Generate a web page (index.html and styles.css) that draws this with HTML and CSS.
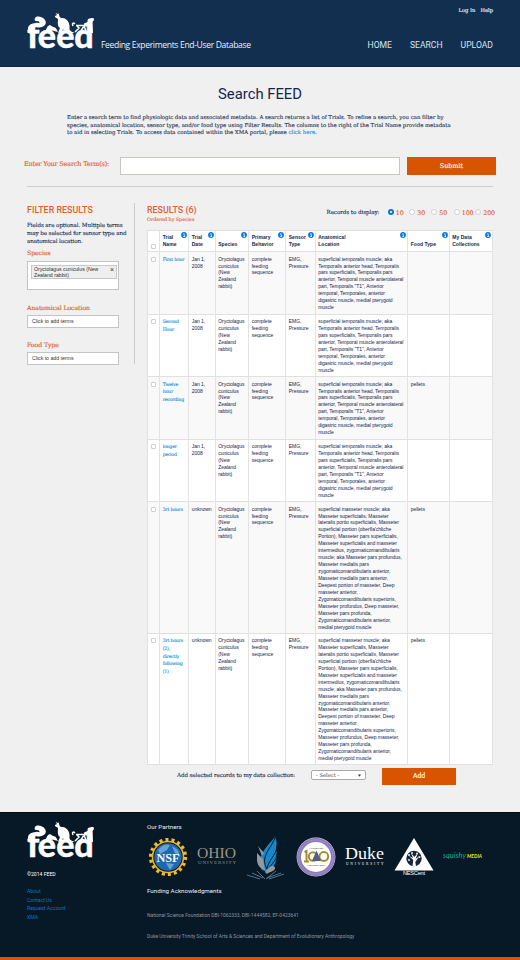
FILE: index.html
```html
<!DOCTYPE html>
<html lang="en">
<head>
<meta charset="utf-8">
<title>Search FEED</title>
<link rel="stylesheet" href="styles.css">
</head>
<body>
<svg class="defs" aria-hidden="true">
  <symbol id="animals" viewBox="0 0 68 38">
    <path d="M2 20 C-1 14 3 10 8 11 C13 13 14 8 10 8 C8 8 7 7 8 5 C10 2 16 4 18 7 C21 12 15 16 9 14 C6 14 7 17 9 18 L5 20Z" fill="#fff"/>
    <path d="M18 19 C20 15 20 13 23 12 L26 14 C29 14 30 17 31 19 L27 18 C24 17 21 19 18 19Z" fill="#fff"/>
    <path d="M28 3 L30 2 L28.5 0 L31 1 L31.5 0 L32.5 3.5 C33 5 34 5 36 5 C41 6 43 11 42.5 15 C42 19 46 19 48 20 L40 20 C39 17 37 16 35 17 L35 19 L31 20 L33 15 C30 13 31 9 31 6 L28 4Z" fill="#fff"/>
    <path d="M46 13 C44.5 9 47 10 48 11 M49 12.5 H58 M50 13 L52 15 L48 19 M57 13 L59 18 M56.5 14 L54 17.5" stroke="#fff" stroke-width="1.5" fill="none"/><path d="M57 10.5 L59.5 9.5 L61.5 11 L60 13.5 L57 13.5Z" fill="#fff"/>
    <path d="M60.5 20 L61.5 10 L60.5 8 C60.5 5 64 5 66.5 5 L67 7 L65.5 9 L66 20Z" fill="#fff"/>
  </symbol>
  <symbol id="info" viewBox="0 0 6 6"><circle cx="3" cy="3" r="2.9" fill="#0877d9"/><path d="M2.4 2.6H3.4V4.5M2.3 4.5H4M2.9 1.2V2" stroke="#fff" stroke-width=".8" fill="none"/></symbol>
</svg>

<header class="top">
  <svg class="logo" viewBox="0 0 68 38"><use href="#animals" width="68" height="38"/><text class="feed" y="34.8" x="0 10.8 29.2 47.3">feed</text></svg>
  <p class="tagline">Feeding Experiments End-User Database</p>
  <div class="menus">
    <div class="account"><a>Log In</a><a>Help</a></div>
    <nav><a>HOME</a><a>SEARCH</a><a>UPLOAD</a></nav>
  </div>
</header>

<main>
  <h1>Search FEED</h1>
  <p class="intro">Enter a search term to find physiologic data and associated metadata. A search returns a list of Trials. To refine a search, you can filter by<br>species, anatomical location, sensor type, and/or food type using Filter Results. The columns to the right of the Trial Name provide metadata<br>to aid in selecting Trials. To access data contained within the XMA portal, please <a>click here</a>.</p>
  <form class="search"><label>Enter Your Search Term(s):</label><div class="query"></div><div class="btn submit">Submit</div></form>

  <div class="columns">
    <aside>
      <h2>FILTER RESULTS</h2>
      <p>Fields are optional. Multiple terms<br>may be selected for sensor type and<br>anatomical location.</p>
      <h3>Species</h3>
      <div class="box tall"><div class="token"><span>Oryctolagus cuniculus (New<br>Zealand rabbit)</span><b>×</b></div></div>
      <h3>Anatomical Location</h3>
      <div class="box">Click to add terms</div>
      <h3>Food Type</h3>
      <div class="box">Click to add terms</div>
    </aside>

    <section class="results">
      <div class="bar">
        <div><h2>RESULTS (6)</h2><p class="order">Ordered by Species</p></div>
        <div class="display"><span class="lbl">Records to display:</span><span class="opts"><label><i class="on"></i>10</label><label><i></i>30</label><label><i></i>50</label><label><i></i>100</label><label><i></i>200</label></span></div>
      </div>
      <div class="table">
        <div class="row head"><div><i class="chk"></i></div><div>Trial<br>Name<svg><use href="#info"/></svg></div><div>Trial<br>Date<svg><use href="#info"/></svg></div><div>Species<svg><use href="#info"/></svg></div><div>Primary<br>Behavior<svg><use href="#info"/></svg></div><div>Sensor<br>Type<svg><use href="#info"/></svg></div><div>Anatomical<br>Location<svg><use href="#info"/></svg></div><div>Food Type<svg><use href="#info"/></svg></div><div>My Data<br>Collections<svg><use href="#info"/></svg></div></div>
        <div class="row"><div><i class="chk"></i></div><div class="name">First hour</div><div>Jan 1,<br>2008</div><div>Oryctolagus<br>cuniculus<br>(New<br>Zealand<br>rabbit)</div><div>complete<br>feeding<br>sequence</div><div>EMG,<br>Pressure</div><div>superficial temporalis muscle; aka<br>Temporalis anterior head, Temporalis<br>pars superficialis, Temporalis pars<br>anterior, Temporal muscle anterolateral<br>part, Temporalis "T1", Anterior<br>temporal, Temporales, anterior<br>digastric muscle, medial pterygoid<br>muscle</div><div></div><div></div></div>
        <div class="row"><div><i class="chk"></i></div><div class="name">Second<br>Hour</div><div>Jan 1,<br>2008</div><div>Oryctolagus<br>cuniculus<br>(New<br>Zealand<br>rabbit)</div><div>complete<br>feeding<br>sequence</div><div>EMG,<br>Pressure</div><div>superficial temporalis muscle; aka<br>Temporalis anterior head, Temporalis<br>pars superficialis, Temporalis pars<br>anterior, Temporal muscle anterolateral<br>part, Temporalis "T1", Anterior<br>temporal, Temporales, anterior<br>digastric muscle, medial pterygoid<br>muscle</div><div></div><div></div></div>
        <div class="row"><div><i class="chk"></i></div><div class="name">Twelve<br>hour<br>recording</div><div>Jan 1,<br>2008</div><div>Oryctolagus<br>cuniculus<br>(New<br>Zealand<br>rabbit)</div><div>complete<br>feeding<br>sequence</div><div>EMG,<br>Pressure</div><div>superficial temporalis muscle; aka<br>Temporalis anterior head, Temporalis<br>pars superficialis, Temporalis pars<br>anterior, Temporal muscle anterolateral<br>part, Temporalis "T1", Anterior<br>temporal, Temporales, anterior<br>digastric muscle, medial pterygoid<br>muscle</div><div>pellets</div><div></div></div>
        <div class="row"><div><i class="chk"></i></div><div class="name">longer<br>period</div><div>Jan 1,<br>2008</div><div>Oryctolagus<br>cuniculus<br>(New<br>Zealand<br>rabbit)</div><div>complete<br>feeding<br>sequence</div><div>EMG,<br>Pressure</div><div>superficial temporalis muscle; aka<br>Temporalis anterior head, Temporalis<br>pars superficialis, Temporalis pars<br>anterior, Temporal muscle anterolateral<br>part, Temporalis "T1", Anterior<br>temporal, Temporales, anterior<br>digastric muscle, medial pterygoid<br>muscle</div><div></div><div></div></div>
        <div class="row long"><div><i class="chk"></i></div><div class="name">3rt hours</div><div>unknown</div><div>Oryctolagus<br>cuniculus<br>(New<br>Zealand<br>rabbit)</div><div>complete<br>feeding<br>sequence</div><div>EMG,<br>Pressure</div><div>superficial masseter muscle; aka<br>Masseter superficialis, Masseter<br>lateralis portio superficialis, Masseter<br>superficial portion (oberfla'chliche<br>Portion), Masseter pars superficialis,<br>Masseter superficialis and masseter<br>intermedius, zygomaticomandibularis<br>muscle; aka Masseter pars profundus,<br>Masseter medialis pars<br>zygomaticomandibularis anterior,<br>Masseter medialis pars anterior,<br>Deepest portion of masseter, Deep<br>masseter anterior,<br>Zygomaticomandibularis superioris,<br>Masseter profundus, Deep masseter,<br>Masseter pars profunda,<br>Zygomaticomandibularis anterior,<br>medial pterygoid muscle</div><div>pellets</div><div></div></div>
        <div class="row long"><div><i class="chk"></i></div><div class="name">3rt hours<br>(2),<br>directly<br>following<br>(1)</div><div>unknown</div><div>Oryctolagus<br>cuniculus<br>(New<br>Zealand<br>rabbit)</div><div>complete<br>feeding<br>sequence</div><div>EMG,<br>Pressure</div><div>superficial masseter muscle; aka<br>Masseter superficialis, Masseter<br>lateralis portio superficialis, Masseter<br>superficial portion (oberfla'chliche<br>Portion), Masseter pars superficialis,<br>Masseter superficialis and masseter<br>intermedius, zygomaticomandibularis<br>muscle; aka Masseter pars profundus,<br>Masseter medialis pars<br>zygomaticomandibularis anterior,<br>Masseter medialis pars anterior,<br>Deepest portion of masseter, Deep<br>masseter anterior,<br>Zygomaticomandibularis superioris,<br>Masseter profundus, Deep masseter,<br>Masseter pars profunda,<br>Zygomaticomandibularis anterior,<br>medial pterygoid muscle</div><div>pellets</div><div></div></div>
      </div>
      <div class="collect"><span>Add selected records to my data collection:</span><div class="select"><span>- Select -</span><svg viewBox="0 0 4 3"><path d="M0 0H4L2 3Z" fill="#333"/></svg></div><div class="btn add">Add</div></div>
    </section>
  </div>
</main>

<footer>
  <div class="left">
    <svg class="logo" viewBox="0 0 68 38"><use href="#animals" width="68" height="38"/><text class="feed" y="34.8" x="0 10.8 29.2 47.3">feed</text></svg>
    <p class="copy">©2014 FEED</p>
    <ul><li>About</li><li>Contact Us</li><li>Request Account</li><li>XMA</li></ul>
  </div>
  <div class="right">
    <h4>Our Partners</h4>
    <div class="partners">
      <svg width="40" height="42" viewBox="0 0 40 42"><circle cx="20" cy="21" r="15.5" fill="none" stroke="#e8b423" stroke-width="1.6"/><circle cx="20" cy="21" r="17.4" fill="none" stroke="#f0bd25" stroke-width="3.4" stroke-dasharray="3 3.07"/><circle cx="20" cy="21" r="13.8" fill="#1d68ae"/><path d="M10 14 Q16 7 22 9 L19 14 L12 18Z M24 10 L30 14 L32 21 L27 17Z M18 27 L26 28 L22 34Z" fill="#67a3d2"/><text x="8.5" y="25.5" textLength="23" lengthAdjust="spacingAndGlyphs" class="nsf">NSF</text></svg>
      <svg width="40" height="42" viewBox="0 0 40 42"><text x="0" y="22.3" textLength="39" lengthAdjust="spacingAndGlyphs" class="ohio">OHIO</text><text x="1" y="27.5" textLength="38" class="univ">UNIVERSITY</text></svg>
      <svg width="40" height="45" viewBox="-1 0 40 45"><path d="M15 34 C9 23 17 13 28 1 C32 10 27 12 30 17 C30 24 28 32 20 36Z" fill="#1687cb"/><path d="M20 33 C13 21 23 14 28 2 M20 35 C20 24 30 20 30 9 M20 36 C22 29 30 26 30 17" stroke="#071827" stroke-width="1" fill="none"/><path d="M10 17 L16 23 L18 34 C13 33 10 28 10 24Z M11 10 L17 17 L15 20Z M18 36 C23 28 29 29 28 33 C26 36 22 36 20 38Z" fill="#9299a1"/><path d="M0 39 L13 43 M5 37 L16 42 M10 35 L18 43 M37 38 L22 43 M34 37 L20 42 M29 35 L19 43" stroke="#678ca8" stroke-width=".8"/></svg>
      <svg width="40" height="42" viewBox="0 0 40 42"><circle cx="20" cy="21" r="19.4" fill="#d8d3e6"/><circle cx="20" cy="21" r="17" fill="#fff" stroke="#8d7bbd" stroke-width="4"/><circle cx="20" cy="21" r="17" fill="none" stroke="#b0a2d6" stroke-width="1" stroke-dasharray="1 1"/><text x="13" y="13" textLength="14" class="micro">A Proud Past</text><path d="M8.5 16 L10.5 15 V25 M8 25.5 H13" fill="none" stroke="#a78b2d" stroke-width="2"/><circle cx="17" cy="20.5" r="4.2" fill="none" stroke="#a78b2d" stroke-width="2"/><circle cx="27.8" cy="20.5" r="4.4" fill="none" stroke="#a78b2d" stroke-width="2"/><path d="M20.5 14.5 L25 25 H16Z" fill="#555f85"/><text x="11" y="30" textLength="18" class="micro">A Brilliant Future</text></svg>
      <svg width="40" height="42" viewBox="0 0 40 42"><text x="0" y="22.6" textLength="39" lengthAdjust="spacingAndGlyphs" class="duke">Duke</text><text x="1" y="28.6" textLength="37.5" class="dukeu">UNIVERSITY</text></svg>
      <svg width="40" height="42" viewBox="0 0 40 42"><path d="M20 2 L39.5 34.5 H.5Z" fill="#fff"/><circle cx="20" cy="22.5" r="7.7" fill="#17273a"/><path d="M18.5 30 L19.3 24 L15 20 L19 22 L17 17 L20.3 21 L24 17 L21.5 23 L25.5 20 L21.3 26 L22 30Z" fill="#fff"/><g fill="#dfe5ea"><circle cx="15" cy="19" r="1.1"/><circle cx="18" cy="17" r="1"/><circle cx="23" cy="17.5" r="1"/><circle cx="25.5" cy="21" r="1"/><circle cx="15" cy="24" r="1"/></g><text x="9" y="39.4" textLength="22" class="nes">NESCent</text></svg>
      <svg width="40" height="42" viewBox="0 0 40 42"><text x="0" y="22.3" textLength="23" lengthAdjust="spacingAndGlyphs" class="squ">squishy</text><text x="24" y="22" textLength="15" lengthAdjust="spacingAndGlyphs" class="med">MEDIA</text></svg>
    </div>
    <h4 class="fund">Funding Acknowledgments</h4>
    <p>National Science Foundation DBI-1062333, DBI-1444582, EF-0423641</p>
    <p>Duke University Trinity School of Arts &amp; Sciences and Department of Evolutionary Anthropology</p>
  </div>
</footer>
</body>
</html>
```
FILE: styles.css
```css
* { box-sizing: border-box; margin: 0; padding: 0; }
body { width: 520px; height: 960px; overflow: hidden; background: #f0f0f0; color: #1b3359; font-family: "DejaVu Serif", serif; font-size: 6px; white-space: nowrap; }
.defs { display: none; }
i { font-style: normal; }

.top { height: 67px; background: #122f50; border-bottom: 1px solid #0c2343; display: flex; padding: 0 27px; color: #e8f3fa; }
.logo { display: block; width: 68px; height: 38px; flex: none; overflow: visible; }
.top .logo { margin-top: 13px; }
.feed { font: 900 34px Lato, sans-serif; fill: #fff; stroke: #fff; stroke-width: .4px; }
.tagline { margin: 39px 0 0 6px; font: 500 8.6px/12px "Open Sans", sans-serif; letter-spacing: -.36px; }
.menus { margin-left: auto; }
.account { display: flex; justify-content: flex-end; gap: 5px; margin-top: 6px; font-size: 5.2px; line-height: 9px; -webkit-text-stroke: .15px; }
nav { display: flex; gap: 18px; margin-top: 24px; font: 400 8.6px/12px Roboto, sans-serif; color: #d5e5ee; }

main { height: 745px; }
h1 { padding-top: 17px; text-align: center; font: 400 14.8px/20px Roboto, sans-serif; color: #14264e; }
.intro { margin: 10px 0 0 67px; font-size: 5.4px; line-height: 7.7px; letter-spacing: -.022px; -webkit-text-stroke: .12px; }
.intro a { color: #1592df; }
.search { display: flex; margin: 20px 24px 0; height: 18px; }
.search label { width: 96px; line-height: 15px; font-size: 6.5px; letter-spacing: -.2px; color: #e0662c; -webkit-text-stroke: .15px; }
.query { width: 280px; background: #fff; border: 1px solid #c9c5bf; }
.btn { background: #d95400; color: #fff; text-align: center; }
.submit { margin-left: 7px; width: 89px; line-height: 18px; font-size: 6.4px; -webkit-text-stroke: .15px; }
.columns { display: flex; margin: 11px 27px 0; border-top: 1px solid #cfcfcf; padding-top: 16px; }

aside { width: 108px; height: 161px; border-right: 1px solid #cacaca; }
h2 { font: 500 8.9px/12px Roboto, sans-serif; color: #df622a; padding-top: 1px; }
aside h2 { letter-spacing: .02px; }
aside p { margin-top: 6px; font-size: 5.6px; line-height: 7.7px; letter-spacing: -.09px; -webkit-text-stroke: .12px; }
h3 { font-weight: 400; font-size: 6.2px; line-height: 8px; letter-spacing: -.08px; color: #df622a; -webkit-text-stroke: .15px; }
aside p + h3 { margin-top: 4px; }
.box { width: 92px; height: 13px; margin-top: 3px; border: 1px solid #c4c4c4; background: #fff; padding-left: 4px; font: 5.2px/11px "Liberation Sans", sans-serif; color: #333; }
.tall + h3 { margin-top: 14px; }
.box:not(.tall) + h3 { margin-top: 13px; }
.tall { height: 29px; margin-top: 4px; padding: 3px 0 0 3px; }
.token { width: 86px; height: 14px; display: flex; justify-content: space-between; padding: 1px 2px; background: #eee; border: 1px solid #c8c8c8; line-height: 5.5px; }
.token b { font-weight: 400; font-size: 7px; }

.results { margin-left: 12px; width: 346px; }
.bar { height: 27px; display: flex; justify-content: space-between; }
.order { font-size: 4.8px; line-height: 8px; letter-spacing: -.03px; color: #df622a; -webkit-text-stroke: .12px; }
.display { display: flex; margin: 4px -3px 0 0; line-height: 9px; align-items: center; height: 10px; }
.display .lbl { width: 61px; font-size: 5.6px; letter-spacing: -.08px; -webkit-text-stroke: .12px; }
.opts { display: grid; grid-template-columns: 21.5px 22px 22.5px 21.5px 21px; }
.opts label { display: flex; align-items: center; gap: 2.2px; font-size: 6.3px; letter-spacing: -.05px; color: #df622a; -webkit-text-stroke: .12px; }
.opts i { flex: none; width: 6px; height: 6px; border: 1px solid #d0d0d0; border-radius: 50%; background: #fff; }
.opts .on { border: 2px solid #0877d9; }

.table { font: 5px/6.93px "Liberation Sans", sans-serif; letter-spacing: -.03px; color: #14264e; border-left: 1px solid #e0e0e0; border-top: 1px solid #e0e0e0; }
.row { display: grid; grid-template-columns: 12px 29px 26.5px 33.5px 37px 29.5px 92.5px 41.5px 43.5px; height: 62.5px; background: #fff; }
.row:nth-child(even) { background: #f9f9f9; }
.row.long { height: 131.5px; }
.row > div { border-right: 1px solid #e3e3e3; border-bottom: 1px solid #e0e0e0; padding: 3.5px 0 0 2.7px; position: relative; }
.row.head { height: 21px; font-weight: 700; line-height: 7.2px; letter-spacing: .05px; }
.row.head > div { display: flex; align-items: flex-end; padding: 0 0 2.5px 2.7px; }
.head svg { position: absolute; width: 6px; height: 6px; right: 1px; top: 1px; }
.chk { display: block; width: 5px; height: 5px; border: 1px solid #cfcfcf; border-radius: 1px; background: #fff; margin-top: 1px; }
.row .name { font: 4.7px/7.7px "DejaVu Serif", serif; letter-spacing: -.22px; color: #1592df; -webkit-text-stroke: .12px; }
.collect { display: flex; padding-left: 30px; font-size: 5.6px; line-height: 14px; padding-top: 3px; }
.collect > span { width: 134px; letter-spacing: -.11px; -webkit-text-stroke: .12px; }
.select { display: flex; align-items: center; justify-content: space-between; width: 55px; height: 10px; margin-top: 2px; padding: 0 4px; background: #fff; border: 1px solid #aaa; border-radius: 2px; font-size: 5.2px; line-height: 8px; color: #444; }
.select svg { width: 3px; height: 3px; }
.add { width: 74px; height: 17px; margin-left: 16px; font: 500 6.8px/17px Roboto, sans-serif; }

footer { height: 148px; background: #071827; border-top: 1px solid #020c17; border-bottom: 3px solid #d95400; display: flex; padding-left: 27px; font-family: Roboto, sans-serif; }
.left { width: 120px; padding-top: 9px; }
.copy { margin-top: 10px; font-size: 5.1px; line-height: 8px; color: #fff; }
ul { list-style: none; margin-top: 9px; font-size: 5.1px; line-height: 8.6px; color: #0d75bd; }
h4 { font-weight: 400; font-size: 6.2px; line-height: 8px; color: #e9eff4; padding-top: 10px; }
.partners { height: 45px; display: flex; gap: 9.2px; margin: 5px 0 0 1px; }
.partners svg { flex: none; overflow: visible; }
.fund { padding-top: 6px; }
.right p { font-size: 4.95px; line-height: 8px; margin-top: 16px; color: #8d969f; }
.right p + p { margin-top: 13px; }
.nsf { font: 700 13px "Liberation Serif", serif; fill: #fff; }
.ohio { font: 14px "Liberation Serif", serif; fill: #9e9582; }
.univ { font: 5px "Liberation Serif", serif; fill: #9e9582; }
.micro { font: 700 2.2px "Liberation Sans", sans-serif; fill: #665; }
.duke { font: 17px "Liberation Serif", serif; fill: #fff; }
.dukeu { font: 3.6px "Liberation Serif", serif; fill: #fff; }
.nes { font: 5.6px "Liberation Sans", sans-serif; fill: #fff; }
.squ { font: italic 8px Lato, sans-serif; fill: #12ad89; }
.med { font: italic 900 5.2px Lato, sans-serif; fill: #d8df22; }
```
